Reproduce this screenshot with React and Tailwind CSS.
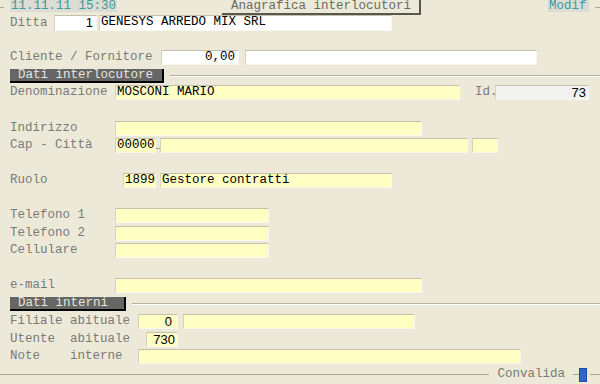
import React from "react";

const mono = "font-['Liberation_Mono','Courier_New',monospace]";
const sans = "font-['Liberation_Sans',Arial,sans-serif]";

function Field({ w, children, className = "", bg = "bg-[#ffffc4]", align = "left", font = mono }) {
  return (
    <div
      className={`h-[15px] ${w} ${bg} border-t border-l border-t-[#c4c0ac] border-l-[#d6d2c0] border-b border-r border-b-[#f8f7f0] border-r-[#f8f7f0] text-black leading-[13px] text-[12.5px] px-[1px] overflow-hidden whitespace-pre ${
        align === "right" ? "text-right" : ""
      } ${font} ${className}`}
    >
      {children}
    </div>
  );
}

function Label({ children, w = "w-[105px]" }) {
  return <div className={`${w} shrink-0 text-[#7a7a78] whitespace-pre`}>{children}</div>;
}

function Row({ mt, children }) {
  return <div className={`flex items-center h-[15px] pl-[10px] ${mt}`}>{children}</div>;
}

function Section({ title, w, mt }) {
  return (
    <div className={`flex items-center h-[14px] pl-[10px] ${mt}`}>
      <div
        className={`${w} h-[14px] bg-[#666664] text-[#e4e4e0] leading-[12px] pl-[8px] border-r-2 border-b-2 border-black whitespace-pre`}
      >
        {title}
      </div>
      <div className="flex-1 ml-[6px] border-t border-t-[#b4b09e] border-b border-b-white" />
    </div>
  );
}

export default function App() {
  return (
    <div className={`w-[600px] h-[384px] bg-[#ece9d8] overflow-hidden flex flex-col text-[12.5px] leading-[15px] ${mono}`}>
      {/* TOP BAR */}
      <div className="flex items-start h-[15px]">
        <div className="w-[4px] mt-[7px] border-t border-t-[#a8a496]" />
        <div className="ml-[6px] h-[12px] bg-[#dcdcd4] text-[#3f9a9a] leading-[12px] px-[1px] whitespace-pre">
          11.11.11 15:30
        </div>
        <div className="ml-[105px] h-[15px] w-[199px] bg-[#ece9d8] border-r-2 border-b-2 border-r-[#585850] border-b-[#585850] text-[#6a6a66] leading-[13px] pl-[9px] whitespace-pre">
          Anagrafica interlocutori
        </div>
        <div className="ml-[127px] h-[12px] w-[41px] bg-[#dcdcd4] text-[#3f9a9a] leading-[12px] pl-[1px]">
          Modif
        </div>
        <div className="flex-1 ml-[6px] mt-[7px] border-t border-t-[#a8a496]" />
      </div>

      {/* DITTA */}
      <div className="flex items-center h-[16px] pl-[10px] mt-0">
        <Label w="w-[44px]">Ditta</Label>
        <Field w="w-[43px]" bg="bg-white" align="right" font={sans} className="h-[16px] text-[13px] pr-[3px]">1</Field>
        <Field w="w-[293px]" bg="bg-white" className="ml-[2px] h-[16px]">GENESYS ARREDO MIX SRL</Field>
      </div>

      {/* CLIENTE */}
      <Row mt="mt-[19px]">
        <Label w="w-[151px]">Cliente / Fornitore</Label>
        <Field w="w-[78px]" bg="bg-white" align="right" className="pr-[3px]">0,00</Field>
        <Field w="w-[292px]" bg="bg-white" className="ml-[6px]" />
      </Row>

      <Section title="Dati interlocutore" w="w-[154px]" mt="mt-[4px]" />

      {/* DENOMINAZIONE */}
      <Row mt="mt-[2px]">
        <Label>Denominazione</Label>
        <Field w="w-[345px]">MOSCONI MARIO</Field>
        <div className="ml-[15px] w-[20px] text-[#7a7a78]">Id.</div>
        <Field w="w-[94px]" bg="bg-[#f2f2f0]" align="right" font={sans} className="text-[13px] pr-[2px]">73</Field>
      </Row>

      <Row mt="mt-[21px]">
        <Label>Indirizzo</Label>
        <Field w="w-[307px]" />
      </Row>

      <Row mt="mt-[2px]">
        <Label>Cap - Città</Label>
        <Field w="w-[41px]">00000</Field>
        <div className="w-[4px] mt-[6px] border-t border-t-[#a8a496]" />
        <Field w="w-[308px]" />
        <Field w="w-[26px]" className="ml-[4px]" />
      </Row>

      <Row mt="mt-[20px]">
        <Label w="w-[113px]">Ruolo</Label>
        <Field w="w-[33px]">1899</Field>
        <Field w="w-[232px]" className="ml-[4px]">Gestore contratti</Field>
      </Row>

      <Row mt="mt-[20px]">
        <Label>Telefono 1</Label>
        <Field w="w-[154px]" />
      </Row>
      <Row mt="mt-[3px]">
        <Label>Telefono 2</Label>
        <Field w="w-[154px]" />
      </Row>
      <Row mt="mt-[2px]">
        <Label>Cellulare</Label>
        <Field w="w-[154px]" />
      </Row>

      <Row mt="mt-[20px]">
        <Label>e-mail</Label>
        <Field w="w-[307px]" />
      </Row>

      <Section title="Dati interni" w="w-[116px]" mt="mt-[4px]" />

      <Row mt="mt-[3px]">
        <Label w="w-[128px]">Filiale abituale</Label>
        <Field w="w-[40px]" align="right" font={sans} className="text-[13px] pr-[5px]">0</Field>
        <Field w="w-[232px]" className="ml-[5px]" />
      </Row>
      <Row mt="mt-[3px]">
        <Label w="w-[136px]">Utente  abituale</Label>
        <Field w="w-[32px]" align="right" font={sans} className="text-[13px] pr-[2px]">730</Field>
      </Row>
      <Row mt="mt-[2px]">
        <Label w="w-[128px]">Note    interne</Label>
        <Field w="w-[383px]" />
      </Row>

      {/* BOTTOM */}
      <div className="flex items-center h-[15px] mt-[3px]">
        <div className="flex-1 border-t border-t-[#a8a496]" />
        <div className="ml-[8px] text-[#7a7a78]">Convalida</div>
        <div className="ml-[8px] w-[6px] border-t border-t-[#a8a496]" />
        <div className="w-[8px] h-[14px] bg-[#2f66c8] border border-[#1c4aa0]" />
        <div className="ml-[3px] w-[10px] border-t border-t-[#a8a496]" />
      </div>
    </div>
  );
}
